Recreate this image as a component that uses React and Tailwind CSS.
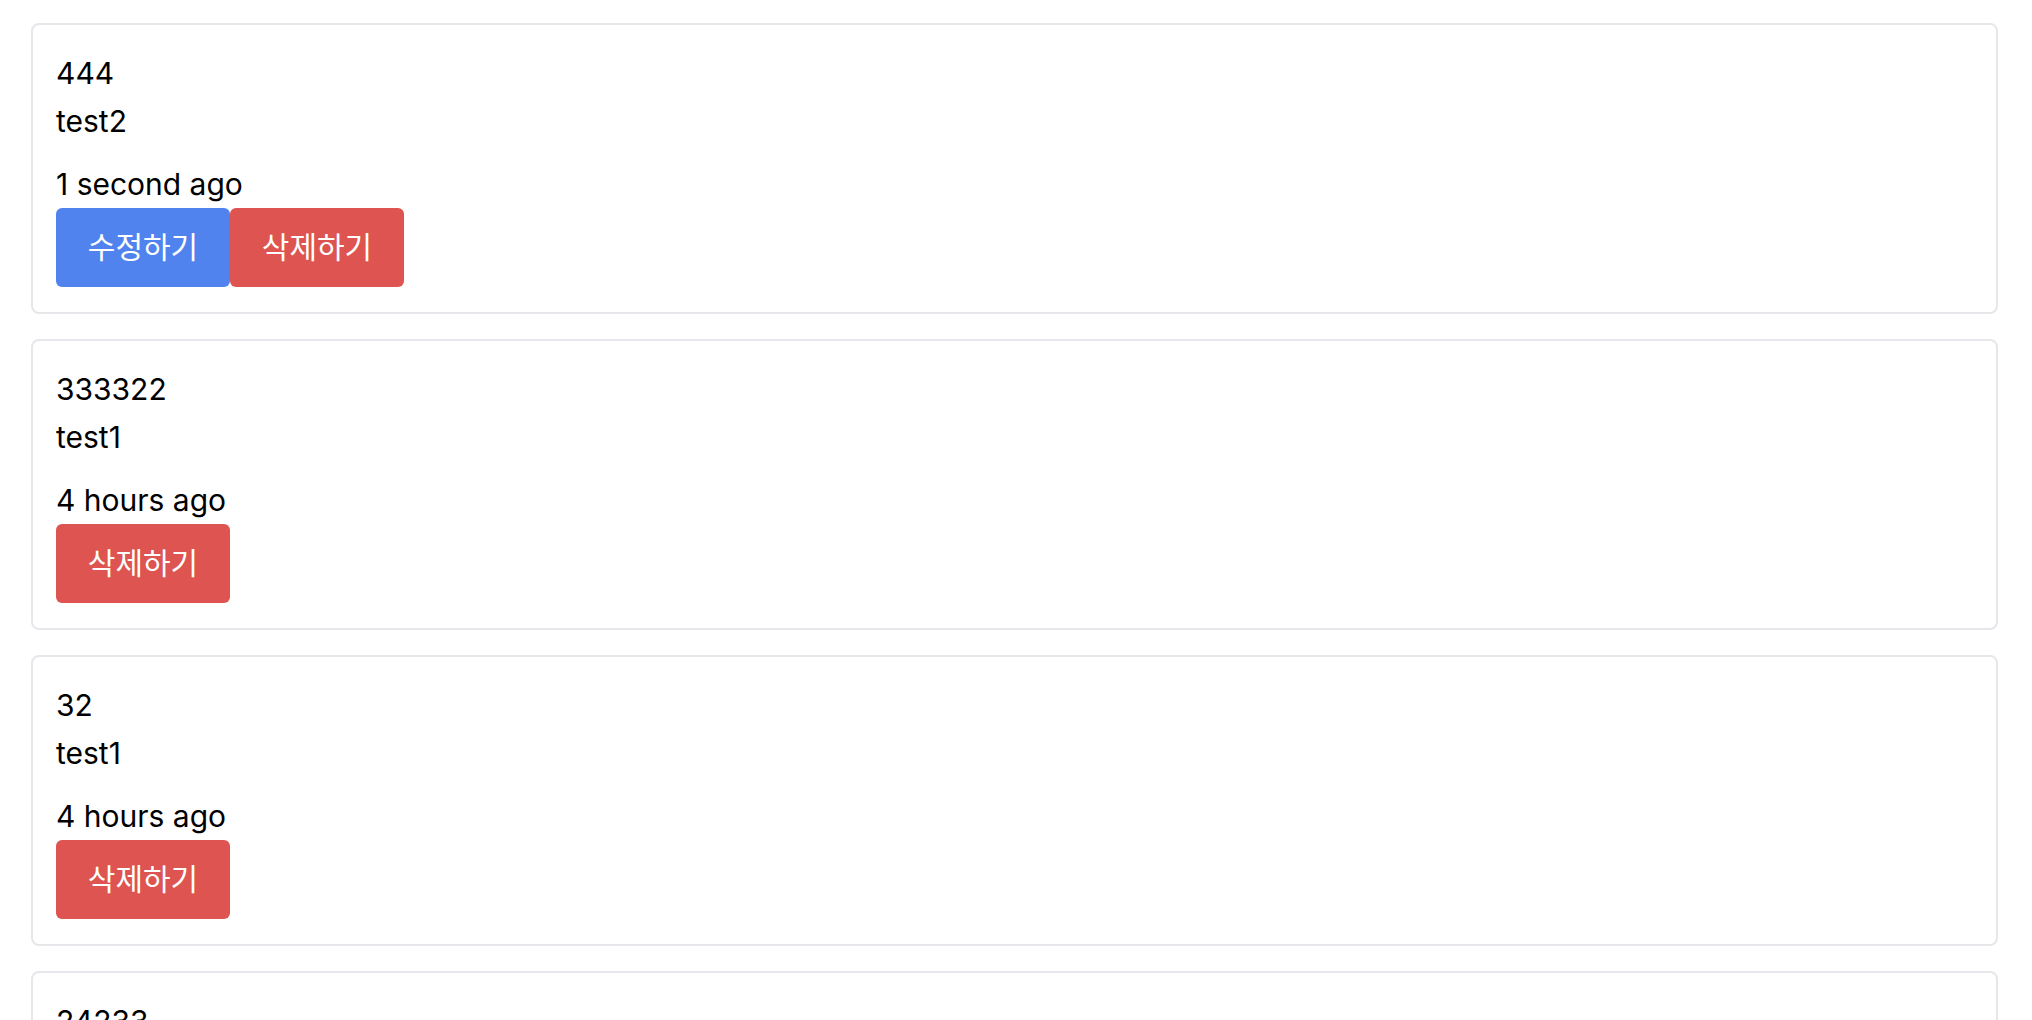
const posts = [
  { id: 1, title: '444', author: 'test2', time: '1 second ago', mine: true },
  { id: 2, title: '333322', author: 'test1', time: '4 hours ago', mine: false },
  { id: 3, title: '32', author: 'test1', time: '4 hours ago', mine: false },
  { id: 4, title: '24233', author: 'test1', time: '4 hours ago', mine: false },
];

function PostCard({ post }) {
  return (
    <div className="rounded-lg border-2 border-[#e7e7eb] bg-white px-[23px] pt-[24px] pb-[25px]">
      <div className="text-[30px] leading-[48px] text-black">{post.title}</div>
      <div className="text-[30px] leading-[48px] text-black">{post.author}</div>
      <div className="mt-[15px] text-[30px] leading-[48px] text-black">{post.time}</div>
      <div className="flex">
        {post.mine && (
          <button className="h-[79px] w-[174px] rounded-md bg-[#5083ed] text-[30px] text-white">
            수정하기
          </button>
        )}
        <button className="h-[79px] w-[174px] rounded-md bg-[#dd5450] text-[30px] text-white">
          삭제하기
        </button>
      </div>
    </div>
  );
}

export default function App() {
  return (
    <div
      className="min-h-screen bg-white pl-[31px] pr-[34px] pt-[23px]"
      style={{ fontFamily: 'Inter, "Noto Sans CJK KR", sans-serif' }}
    >
      <div className="flex flex-col gap-[25px]">
        {posts.map((post) => (
          <PostCard key={post.id} post={post} />
        ))}
      </div>
    </div>
  );
}
